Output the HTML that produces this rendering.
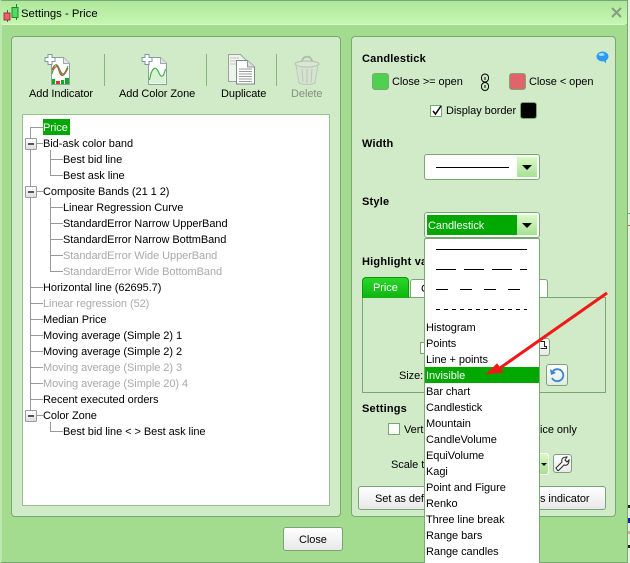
<!DOCTYPE html>
<html><head><meta charset="utf-8"><style>
html,body{margin:0;padding:0;width:630px;height:563px;overflow:hidden;background:#e8f3e4}
*{box-sizing:border-box}
body{font:11px "Liberation Sans",sans-serif;color:#000;position:relative}
.a,.t{position:absolute}
.t{white-space:nowrap;line-height:16px;height:16px;letter-spacing:-.06px;margin-top:1px}
.g{color:#a9a9a9}
.b{font-weight:bold;letter-spacing:.2px}
.btn{position:absolute;border:1px solid #7ba37b;border-radius:3px;background:linear-gradient(#fff,#e9e9e9)}
.arrowbtn{position:absolute;width:20px;height:20px;background:linear-gradient(#d8fbc4,#a8e096)}
.arrowbtn:after{content:"";position:absolute;left:5px;top:8px;border:5px solid transparent;border-top:5px solid #000;border-bottom:0}
.l{position:absolute;background:#000;height:1px}
.tl{position:absolute;background:#9a9a9a}
.box{position:absolute;left:25px;width:12px;height:12px;border:1px solid #8fa0a8;background:linear-gradient(#fff,#ddd);border-radius:1px}
.box:after{content:"";position:absolute;left:2px;top:4px;width:6px;height:2px;background:#555}
</style></head><body>
<!-- window -->
<div class="a" style="left:0;top:0;width:628px;height:563px;background:#a3db8f;border:1px solid #77a874;border-left:2px solid #bfe6ae;border-top:1px solid #77a874"></div>
<div class="a" style="left:1px;top:1px;width:626px;height:23px;background:linear-gradient(#aee79c,#c6f6b0)"></div>
<div class="a" style="left:2px;top:24px;width:623px;height:1px;background:#d9f5cc"></div>
<svg class="a" style="left:3px;top:4px" width="16" height="18"><path d="M4.500 8v13M13.500 1v17" stroke="#2a7a2a" fill="none" transform="translate(0,-2)"/><rect x="1" y="9" width="6" height="7" fill="#f0606a" stroke="#a03040"/><rect x="9.500" y="3.500" width="6" height="10" fill="#4fdc5f" stroke="#1e8a2e" transform="translate(-.5,0)"/></svg>
<div class="t" style="left:21px;top:5px;font-size:11.300px;letter-spacing:0">Settings - Price</div>
<svg class="a" style="left:611px;top:7px" width="12" height="12"><path d="M1 1l9 9M10 1l-9 9" stroke="#7f9f80" stroke-width="2"/></svg>

<!-- left panel -->
<div class="a" style="left:11px;top:36px;width:330px;height:481px;background:#d1ebc8;border:1px solid #7aa873;border-radius:4px"></div>
<div class="a" style="left:104px;top:54px;width:1px;height:32px;background:#84b67e"></div>
<div class="a" style="left:206px;top:54px;width:1px;height:32px;background:#84b67e"></div>
<div class="a" style="left:276px;top:54px;width:1px;height:32px;background:#84b67e"></div>

<svg class="a" style="left:44px;top:53px" width="30" height="32">
<path d="M7.500 4.500h12l6 6v21h-18z" fill="#fff" stroke="#8f9f9f"/><path d="M19.500 4.500v6h6" fill="#e5e5e5" stroke="#a0aaaa"/>
<path d="M8 17c3-8 5-6 7 1s5 6 9-3M8 20c3-8 6-8 8-3s5 6 8-2" fill="none" stroke="#d83a3a"/><path d="M8 21c3-14 6-10 8-3s4 4 8-5" fill="none" stroke="#35ab35"/>
<rect x="8" y="26" width="3" height="5" fill="#08b020"/><rect x="12" y="28" width="4" height="3" fill="#e03040"/><rect x="17" y="27" width="3" height="4" fill="#08b020"/><rect x="21" y="25" width="4" height="6" fill="#08b020"/>
<path d="M4.500 1h4v3h3v4h-3v3h-4V8h-3V4h3z" fill="#fff" stroke="#7d98a5" transform="translate(-.5,.5)"/></svg>
<svg class="a" style="left:141px;top:53px" width="30" height="32">
<path d="M7.500 4.500h12l6 6v21h-18z" fill="#fff" stroke="#8f9f9f"/><path d="M19.500 4.500v6h6" fill="#e5e5e5" stroke="#a0aaaa"/>
<path d="M8.500 27c2-12 6-15 9-8s5 5 7-3v14.500h-16z" fill="#d9f2d4"/><path d="M8.500 27c2-12 6-15 9-8s5 5 7-3" fill="none" stroke="#40b048" stroke-width="1.200"/>
<path d="M4.500 1h4v3h3v4h-3v3h-4V8h-3V4h3z" fill="#fff" stroke="#7d98a5" transform="translate(-.5,.5)"/></svg>
<svg class="a" style="left:227px;top:53px" width="32" height="32">
<path d="M1.500 1.500h12l6 6v21h-18z" fill="#eef3ec" stroke="#9aa5a0"/><path d="M3 5h9M3 8h9M3 11h6" stroke="#c4c8c4"/>
<path d="M9.500 7.500h11l7 6.500v17h-18z" fill="#fff" stroke="#7d8a8a"/><path d="M20.500 7.500v6.500h7" fill="#ddd" stroke="#8f9a9a"/>
<path d="M12 16h13M12 18.500h13M12 21h13M12 23.500h13M12 26h13M12 28.500h13" stroke="#9a9a9a"/></svg>
<svg class="a" style="left:293px;top:54px" width="28" height="32">
<path d="M9 8c0-7 10-7 10 0" fill="none" stroke="#b2bfae" stroke-width="2"/><ellipse cx="14" cy="10" rx="12" ry="3" fill="#d9e6d4" stroke="#b2bfae"/>
<path d="M3 11l3 18c4 2 12 2 16 0l3-18c-6 3-16 3-22 0z" fill="#d6e3d0" stroke="#bccab8"/><path d="M9 15l1 13M14 15v14M19 15l-1 13" stroke="#b8c6b3"/></svg>
<div class="t" style="left:29px;top:85px">Add Indicator</div>
<div class="t" style="left:119px;top:85px">Add Color Zone</div>
<div class="t" style="left:221px;top:85px">Duplicate</div>
<div class="t" style="left:291px;top:85px;color:#848f80">Delete</div>

<!-- tree -->
<div class="a" style="left:22px;top:114px;width:308px;height:392px;background:#fff;border:1px solid #98c391"></div>
<div class="tl" style="left:30px;top:127px;width:1px;height:288px"></div>
<div class="tl" style="left:30px;top:127px;width:13px;height:1px"></div>
<div class="tl" style="left:30px;top:143px;width:13px;height:1px"></div>
<div class="tl" style="left:30px;top:191px;width:13px;height:1px"></div>
<div class="tl" style="left:30px;top:287px;width:13px;height:1px"></div>
<div class="tl" style="left:30px;top:303px;width:13px;height:1px"></div>
<div class="tl" style="left:30px;top:319px;width:13px;height:1px"></div>
<div class="tl" style="left:30px;top:335px;width:13px;height:1px"></div>
<div class="tl" style="left:30px;top:351px;width:13px;height:1px"></div>
<div class="tl" style="left:30px;top:367px;width:13px;height:1px"></div>
<div class="tl" style="left:30px;top:383px;width:13px;height:1px"></div>
<div class="tl" style="left:30px;top:399px;width:13px;height:1px"></div>
<div class="tl" style="left:30px;top:415px;width:13px;height:1px"></div>
<div class="tl" style="left:50px;top:150px;width:1px;height:25px"></div>
<div class="tl" style="left:50px;top:159px;width:13px;height:1px"></div>
<div class="tl" style="left:50px;top:175px;width:13px;height:1px"></div>
<div class="tl" style="left:50px;top:198px;width:1px;height:73px"></div>
<div class="tl" style="left:50px;top:207px;width:13px;height:1px"></div>
<div class="tl" style="left:50px;top:223px;width:13px;height:1px"></div>
<div class="tl" style="left:50px;top:239px;width:13px;height:1px"></div>
<div class="tl" style="left:50px;top:255px;width:13px;height:1px"></div>
<div class="tl" style="left:50px;top:271px;width:13px;height:1px"></div>
<div class="tl" style="left:50px;top:422px;width:1px;height:9px"></div>
<div class="tl" style="left:50px;top:431px;width:13px;height:1px"></div>
<div class="box" style="top:138px"></div>
<div class="box" style="top:186px"></div>
<div class="box" style="top:410px"></div>
<div class="a" style="left:43px;top:119px;width:27px;height:16px;background:#00a800"></div>
<div class="t" style="left:43px;top:119px;color:#fff">Price</div>
<div class="t" style="left:43px;top:135px">Bid-ask color band</div>
<div class="t" style="left:63px;top:151px">Best bid line</div>
<div class="t" style="left:63px;top:167px">Best ask line</div>
<div class="t" style="left:43px;top:183px">Composite Bands (21 1 2)</div>
<div class="t" style="left:63px;top:199px">Linear Regression Curve</div>
<div class="t" style="left:63px;top:215px">StandardError Narrow UpperBand</div>
<div class="t" style="left:63px;top:231px">StandardError Narrow BottmBand</div>
<div class="t g" style="left:63px;top:247px">StandardError Wide UpperBand</div>
<div class="t g" style="left:63px;top:263px">StandardError Wide BottomBand</div>
<div class="t" style="left:43px;top:279px">Horizontal line (62695.7)</div>
<div class="t g" style="left:43px;top:295px">Linear regression (52)</div>
<div class="t" style="left:43px;top:311px">Median Price</div>
<div class="t" style="left:43px;top:327px">Moving average (Simple 2) 1</div>
<div class="t" style="left:43px;top:343px">Moving average (Simple 2) 2</div>
<div class="t g" style="left:43px;top:359px">Moving average (Simple 2) 3</div>
<div class="t g" style="left:43px;top:375px">Moving average (Simple 20) 4</div>
<div class="t" style="left:43px;top:391px">Recent executed orders</div>
<div class="t" style="left:43px;top:407px">Color Zone</div>
<div class="t" style="left:63px;top:423px">Best bid line &lt; &gt; Best ask line</div>

<div class="btn" style="left:283px;top:527px;width:60px;height:24px"></div>
<div class="t" style="left:299px;top:531px">Close</div>

<!-- right panel -->
<div class="a" style="left:351px;top:36px;width:265px;height:481px;background:#d1ebc8;border:1px solid #7aa873;border-radius:4px"></div>
<div class="t b" style="left:362px;top:50px">Candlestick</div>
<svg class="a" style="left:596px;top:51px" width="13" height="13"><ellipse cx="6.500" cy="5.500" rx="6" ry="5" fill="#2a9cf0"/><ellipse cx="5.500" cy="3.500" rx="3" ry="1.500" fill="#a5dcff"/><path d="M7 9l3 3.500 0-4z" fill="#2a9cf0"/></svg>
<div class="a" style="left:372px;top:73px;width:17px;height:17px;background:#4fd14f;border:1px solid #7aa873;border-radius:3px"></div>
<div class="t" style="left:392px;top:73px">Close &gt;= open</div>
<svg class="a" style="left:480px;top:73px" width="10" height="18"><rect x="1.500" y="1" width="7" height="8" rx="3.500" fill="none" stroke="#000"/><rect x="1.500" y="9.500" width="7" height="8" rx="3.500" fill="none" stroke="#000"/><path d="M5 4v3M5 12v3" stroke="#000"/></svg>
<div class="a" style="left:509px;top:73px;width:17px;height:17px;background:#e0646a;border:1px solid #7aa873;border-radius:3px"></div>
<div class="t" style="left:529px;top:73px">Close &lt; open</div>
<div class="a" style="left:430px;top:105px;width:12px;height:12px;background:#fff;border:1px solid #7aa873"></div>
<svg class="a" style="left:431px;top:104px" width="12" height="12"><path d="M2 7l2.500 3L10 2" fill="none" stroke="#000" stroke-width="1.500"/></svg>
<div class="t" style="left:446px;top:102px">Display border</div>
<div class="a" style="left:520px;top:102px;width:17px;height:17px;background:#000;border:1px solid #7aa873;border-radius:3px"></div>

<div class="t b" style="left:362px;top:135px">Width</div>
<div class="a" style="left:424px;top:154px;width:116px;height:26px;background:#fff;border:1px solid #7aa873;border-radius:3px"></div>
<div class="l" style="left:436px;top:167px;width:73px"></div>
<div class="arrowbtn" style="left:517px;top:157px"></div>

<div class="t b" style="left:362px;top:193px">Style</div>
<div class="a" style="left:424px;top:212px;width:116px;height:26px;background:#fff;border:1px solid #7aa873;border-radius:3px"></div>
<div class="a" style="left:427px;top:215px;width:90px;height:20px;background:#00a800"></div>
<div class="t" style="left:428px;top:217px;color:#fff">Candlestick</div>
<div class="arrowbtn" style="left:517px;top:215px"></div>

<div class="t b" style="left:362px;top:253px">Highlight va</div>
<div class="a" style="left:362px;top:297px;width:244px;height:96px;border:1px solid #7aa873"></div>
<div class="a" style="left:410px;top:279px;width:138px;height:18px;background:#fff;border:1px solid #7aa873;border-bottom:0;border-radius:3px 3px 0 0"></div>
<div class="t" style="left:421px;top:280px">C</div>
<div class="a" style="left:362px;top:277px;width:47px;height:21px;background:linear-gradient(#2bd62b,#0fb40f);border:1px solid #0a9a0a;border-bottom:0;border-radius:4px 4px 0 0"></div>
<div class="t" style="left:373px;top:279px;color:#fff">Price</div>
<div class="a" style="left:420px;top:342px;width:6px;height:12px;background:#fff;border:1px solid #7aa873"></div>
<div class="btn" style="left:536px;top:338px;width:14px;height:18px"></div>
<svg class="a" style="left:540px;top:339px" width="8" height="12"><path d="M0.500 2.500h4v5h2v2h-6" fill="none" stroke="#222"/></svg>
<div class="t" style="left:399px;top:367px">Size:</div>
<div class="btn" style="left:546px;top:364px;width:22px;height:22px;background:linear-gradient(#fff,#dfeee0)"></div>
<svg class="a" style="left:548px;top:366px" width="18" height="18"><path d="M5 5a6 6 0 1 1-1 7" fill="none" stroke="#3a84d0" stroke-width="1.800"/><path d="M2 3l1 6 5-2z" fill="#3a84d0"/></svg>

<div class="t b" style="left:362px;top:400px">Settings</div>
<div class="a" style="left:388px;top:423px;width:12px;height:12px;background:#fff;border:1px solid #7aa873"></div>
<div class="t" style="left:404px;top:421px">Vert</div>
<div class="t" style="left:540px;top:421px">ice only</div>
<div class="t" style="left:391px;top:456px">Scale t</div>
<div class="a" style="left:530px;top:453px;width:19px;height:22px;background:linear-gradient(#d8fbc4,#a8e096);border:1px solid #fff;border-left:0;border-radius:0 3px 3px 0"></div>
<div class="a" style="left:541px;top:463px;border:3px solid transparent;border-top:3px solid #000;border-bottom:0"></div>
<div class="btn" style="left:553px;top:454px;width:19px;height:19px"></div>
<svg class="a" style="left:555px;top:456px" width="15" height="15"><path d="M1 12l6-6c-1-3 1-5 5-5l-2 3 2 2 2-2c0 4-2 6-5 5l-6 6z" fill="#fff" stroke="#222"/></svg>
<div class="btn" style="left:358px;top:486px;width:248px;height:24px"></div>
<div class="t" style="left:375px;top:490px">Set as def</div>
<div class="t" style="left:540px;top:490px">s indicator</div>

<!-- dropdown -->
<div class="a" style="left:424px;top:238px;width:116px;height:326px;background:#fff;border:1px solid #7aa873;border-radius:2px 2px 0 0"></div>
<div class="l" style="left:436px;top:249px;width:91px"></div>
<svg class="a" style="left:436px;top:269px" width="92" height="1"><path d="M0 .5h91" stroke="#000" stroke-dasharray="20 8 20 8 20 8 7 100"/></svg>
<svg class="a" style="left:436px;top:289px" width="92" height="1"><path d="M0 .5h91" stroke="#000" stroke-dasharray="12 12"/></svg>
<svg class="a" style="left:436px;top:309px" width="92" height="1"><path d="M0 .5h91" stroke="#000" stroke-dasharray="4 4"/></svg>
<div class="a" style="left:425px;top:367px;width:114px;height:16px;background:#00a800"></div>
<div class="t" style="left:426px;top:319px">Histogram</div>
<div class="t" style="left:426px;top:335px">Points</div>
<div class="t" style="left:426px;top:351px">Line + points</div>
<div class="t" style="left:426px;top:367px;color:#fff">Invisible</div>
<div class="t" style="left:426px;top:383px">Bar chart</div>
<div class="t" style="left:426px;top:399px">Candlestick</div>
<div class="t" style="left:426px;top:415px">Mountain</div>
<div class="t" style="left:426px;top:431px">CandleVolume</div>
<div class="t" style="left:426px;top:447px">EquiVolume</div>
<div class="t" style="left:426px;top:463px">Kagi</div>
<div class="t" style="left:426px;top:479px">Point and Figure</div>
<div class="t" style="left:426px;top:495px">Renko</div>
<div class="t" style="left:426px;top:511px">Three line break</div>
<div class="t" style="left:426px;top:527px">Range bars</div>
<div class="t" style="left:426px;top:543px">Range candles</div>

<!-- red arrow -->
<svg class="a" style="left:480px;top:285px" width="135" height="100"><path d="M127 8L20 83" stroke="#f01818" stroke-width="3"/><path d="M7 89l10-10 6 8z" fill="#f01818" stroke="#f01818"/></svg>

<!-- outside -->
<div class="a" style="left:628px;top:213px;width:2px;height:1px;background:#6ab56a"></div>
<div class="a" style="left:628px;top:225px;width:2px;height:1px;background:#d96a6a"></div>
<div class="a" style="left:628px;top:505px;width:2px;height:3px;background:#222"></div>
<div class="a" style="left:628px;top:518px;width:2px;height:5px;background:#1020c0"></div>
<div class="a" style="left:628px;top:531px;width:2px;height:3px;background:#f0a0a0"></div>
<div class="a" style="left:628px;top:545px;width:2px;height:3px;background:#222"></div>
</body></html>
